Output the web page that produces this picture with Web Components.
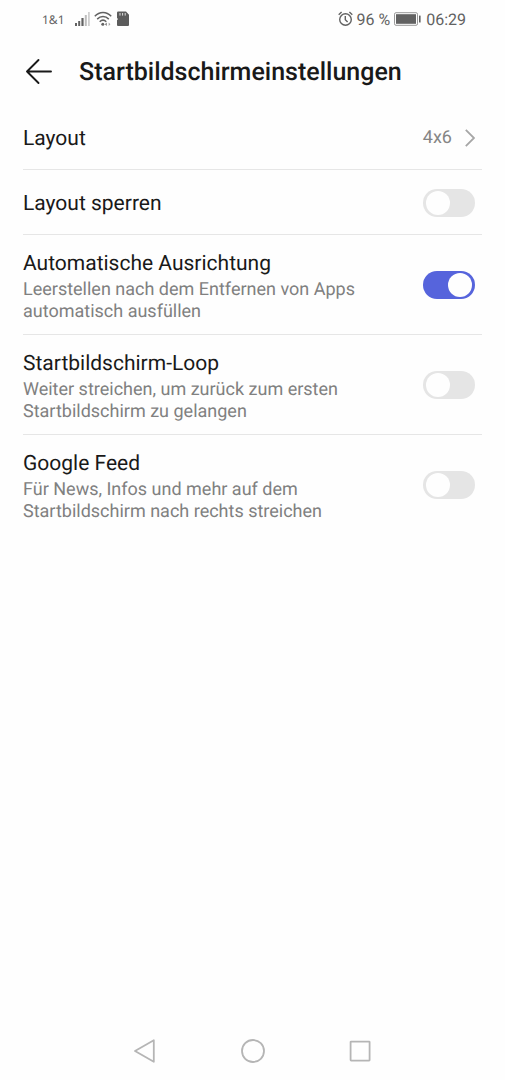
<!DOCTYPE html>
<html lang="de">
<head>
<meta charset="utf-8">
<meta name="viewport" content="width=device-width, initial-scale=1">
<title>Startbildschirmeinstellungen</title>
<style>
  body {
    margin: 0;
    background: #fefefe;
    color: #191919;
    font-family: Roboto, "Liberation Sans", sans-serif;
    text-rendering: geometricPrecision;
  }
</style>
</head>
<body>
<settings-screen>
  <status-bar slot="status" carrier="1&amp;1" battery="96 %" time="06:29"></status-bar>
  <page-header slot="header">Startbildschirmeinstellungen</page-header>
  <link-row value="4x6">Layout</link-row>
  <switch-row>Layout sperren</switch-row>
  <switch-row checked>Automatische Ausrichtung
    <span slot="hint">Leerstellen nach dem Entfernen von Apps automatisch ausfüllen</span>
  </switch-row>
  <switch-row>Startbildschirm-Loop
    <span slot="hint">Weiter streichen, um zurück zum ersten Startbildschirm zu gelangen</span>
  </switch-row>
  <switch-row>Google Feed
    <span slot="hint">Für News, Infos und mehr auf dem Startbildschirm nach rechts streichen</span>
  </switch-row>
  <nav-bar slot="nav"></nav-bar>
</settings-screen>

<script>
class BaseElement extends HTMLElement {
  constructor() {
    super();
    this.attachShadow({ mode: "open" });
    const template = document.createElement("template");
    template.innerHTML = this.constructor.markup;
    this.shadowRoot.appendChild(template.content.cloneNode(true));
  }
}

class SettingsScreen extends BaseElement {
  static markup = `
    <style>
      :host {
        display: flex;
        flex-direction: column;
        min-height: 100vh;
      }
      main {
        flex: 1;
        padding: 0 23px;
      }
    </style>
    <slot name="status"></slot>
    <slot name="header"></slot>
    <main><slot></slot></main>
    <slot name="nav"></slot>
  `;
}

class StatusBar extends BaseElement {
  static markup = `
    <style>
      :host {
        display: flex;
        justify-content: space-between;
        align-items: center;
        height: 38px;
        padding: 0 39px 0 42px;
        color: #626262;
        font-size: 16px;
      }
      div {
        display: flex;
        align-items: center;
      }
      svg {
        display: block;
      }
      #carrier {
        font-family: "Noto Sans", Roboto, sans-serif;
        font-size: 12px;
        margin-right: 10px;
      }
      .signal {
        margin-right: 3px;
      }
      .wifi {
        margin-right: 5px;
      }
      .alarm {
        margin-right: 3px;
      }
      .battery {
        margin: 0 5px 0 4px;
      }
    </style>
    <div>
      <span id="carrier"></span>
      <svg class="signal" width="16" height="16" viewBox="0 0 16 16" fill="#626262">
        <rect x="0" y="12" width="2" height="3"/>
        <rect x="3.2" y="10" width="2" height="5"/>
        <rect x="6.4" y="7" width="2.2" height="8"/>
        <rect x="9.8" y="4" width="2" height="11" fill="#bdbdbd"/>
        <rect x="13" y="1" width="1.8" height="14" fill="#d0d0d0"/>
      </svg>
      <svg class="wifi" width="18" height="16" viewBox="0 0 18 16" fill="none" stroke="#626262" stroke-width="1.5">
        <path d="M0.8 5.3C5.5 0.3 12.5 0.3 17.2 5.3"/>
        <path d="M3.2 8.1C6.6 4.7 11.4 4.7 14.8 8.1"/>
        <path d="M5.7 10.7C7.8 8.7 10.2 8.7 12.3 10.7"/>
        <circle cx="8.8" cy="13.2" r="1.5" fill="#626262" stroke="none"/>
        <path d="M12.7 11.4v3.6l-1.7-1.8z" fill="#626262" stroke="none"/>
        <path d="M14.7 11.4v3.6l1.7-1.8z" fill="#a0a0a0" stroke="none"/>
      </svg>
      <svg width="12" height="16" viewBox="0 0 12 16">
        <path d="M1.2 0.5H9L12 3.8V14a1 1 0 0 1-1 1H1a1 1 0 0 1-1-1V9.3L1 8.1 0 7V1.7A1.2 1.2 0 0 1 1.2 0.5z" fill="#5c5c5c"/>
        <path d="M3 2v2.6M5.6 2v2.6M8.2 2v2.6" stroke="#ddd"/>
      </svg>
    </div>
    <div>
      <svg class="alarm" width="15" height="16" viewBox="0 0 15 16" fill="none" stroke="#626262" stroke-width="1.4">
        <circle cx="7.5" cy="8.5" r="5.8"/>
        <path d="M7.3 5v3.8l2.3 2.2M0.7 3.7L3.6 1M14.3 3.7L11.4 1"/>
      </svg>
      <span id="battery"></span>
      <svg class="battery" width="27" height="14" viewBox="0 0 27 14">
        <rect x="0.5" y="0.7" width="23" height="12.6" rx="1.5" fill="#fefefe" stroke="#999"/>
        <rect x="2" y="2.2" width="20" height="9.6" fill="#626262"/>
        <rect x="25" y="3.5" width="1.6" height="7" rx="0.5" fill="#626262"/>
      </svg>
      <span id="time"></span>
    </div>
  `;
  connectedCallback() {
    for (const name of ["carrier", "battery", "time"]) {
      this.shadowRoot.getElementById(name).textContent = this.getAttribute(name);
    }
  }
}

class PageHeader extends BaseElement {
  static markup = `
    <style>
      :host {
        display: flex;
        align-items: center;
        gap: 26px;
        height: 67px;
        padding: 0 23px 0 25px;
      }
      button {
        padding: 0;
        border: 0;
        background: none;
        color: inherit;
      }
      svg {
        display: block;
      }
      h1 {
        margin: 0;
        padding-top: 3px;
        font-size: 25px;
        font-weight: 500;
        line-height: 32px;
      }
    </style>
    <button aria-label="Zurück">
      <svg width="28" height="28" viewBox="0 0 28 28" fill="none" stroke="currentColor" stroke-width="1.9" stroke-linecap="round" stroke-linejoin="round">
        <path d="M26 13.5H2M13.5 2L2 13.5l11.5 11.5"/>
      </svg>
    </button>
    <h1><slot></slot></h1>
  `;
}

const rowStyles = `
  :host {
    display: block;
    border-bottom: 1px solid #e6e6e6;
  }
  .row {
    display: flex;
    align-items: center;
    justify-content: space-between;
    box-sizing: border-box;
    min-height: 64px;
    padding: 12px 7px 11px 0;
    color: inherit;
    text-decoration: none;
  }
  .label {
    display: block;
    padding-top: 3px;
    font-size: 21px;
    line-height: 28px;
  }
`;

class LinkRow extends BaseElement {
  static markup = `
    <style>
      ${rowStyles}
      .value {
        display: flex;
        align-items: center;
        gap: 13px;
        color: #858585;
        font-size: 18px;
      }
      svg {
        display: block;
      }
    </style>
    <a class="row" href="#layout">
      <span class="label"><slot></slot></span>
      <span class="value">
        <span id="value"></span>
        <svg width="10" height="18" viewBox="0 0 10 18" fill="none" stroke="#a6a6a6" stroke-width="1.8">
          <path d="M0.8 0.8L9 9 0.8 17.2"/>
        </svg>
      </span>
    </a>
  `;
  connectedCallback() {
    this.shadowRoot.getElementById("value").textContent = this.getAttribute("value");
  }
}

class SwitchRow extends BaseElement {
  static markup = `
    <style>
      ${rowStyles}
      :host(:last-of-type) {
        border-bottom: 0;
      }
      .text {
        flex: 0 1 350px;
      }
      .hint {
        display: block;
        color: #808080;
        font-size: 18px;
        line-height: 22px;
      }
      ::slotted([slot="hint"]) {
        display: block;
        padding-top: 1px;
      }
      input {
        appearance: none;
        display: flex;
        flex: none;
        box-sizing: border-box;
        width: 52px;
        height: 28px;
        margin: 0;
        padding: 2px 3px;
        border-radius: 14px;
        background: #e5e5e5;
      }
      input::before {
        content: "";
        width: 24px;
        height: 24px;
        border-radius: 50%;
        background: #fefefe;
      }
      input:checked {
        justify-content: flex-end;
        background: #5664dc;
      }
    </style>
    <label class="row">
      <span class="text">
        <span class="label"><slot></slot></span>
        <span class="hint"><slot name="hint"></slot></span>
      </span>
      <input type="checkbox" role="switch">
    </label>
  `;
  connectedCallback() {
    this.shadowRoot.querySelector("input").checked = this.hasAttribute("checked");
  }
}

class NavBar extends BaseElement {
  static markup = `
    <style>
      :host {
        display: flex;
        justify-content: center;
        gap: 84px;
        padding: 17px 0;
      }
      button {
        padding: 0;
        border: 0;
        background: none;
      }
      svg {
        display: block;
        fill: none;
        stroke: #b5b5b5;
        stroke-width: 1.8;
        stroke-linejoin: round;
      }
    </style>
    <button aria-label="Zurück">
      <svg width="24" height="24" viewBox="0 0 24 24"><path d="M20.8 1.2v21.6L2 12z"/></svg>
    </button>
    <button aria-label="Startbildschirm">
      <svg width="24" height="24" viewBox="0 0 24 24"><circle cx="12" cy="12" r="11"/></svg>
    </button>
    <button aria-label="Letzte Apps">
      <svg width="24" height="24" viewBox="0 0 24 24"><rect x="1.6" y="2.6" width="19" height="19" rx="0.5"/></svg>
    </button>
  `;
}

customElements.define("settings-screen", SettingsScreen);
customElements.define("status-bar", StatusBar);
customElements.define("page-header", PageHeader);
customElements.define("link-row", LinkRow);
customElements.define("switch-row", SwitchRow);
customElements.define("nav-bar", NavBar);
</script>
</body>
</html>
